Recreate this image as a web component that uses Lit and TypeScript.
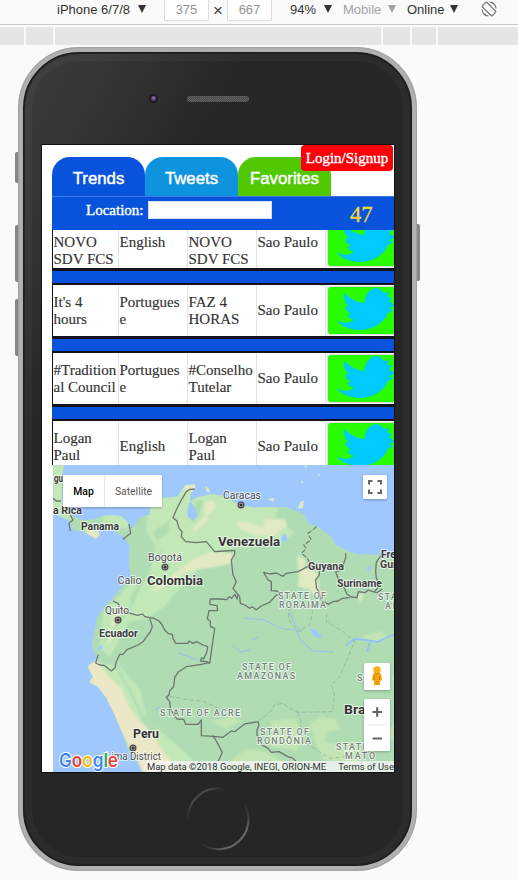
import { LitElement, html, svg, css } from "lit";
import { customElement } from "lit/decorators.js";

type Label = [text: string, x: number, y: number, width: number, kind: string];

const LABELS: Label[] = [
  ["gu", 54, 482, 9, "country"],
  ["a Rica", 53, 514, 29, "country"],
  ["Panama", 81, 530, 38, "country"],
  ["Caracas", 223, 499, 38, "city"],
  ["Venezuela", 218, 546, 62, "big"],
  ["Bogotá", 148, 561, 34, "city"],
  ["Calio", 117.5, 584, 24, "city"],
  ["Colombia", 147, 585, 56, "big"],
  ["Guyana", 308, 570, 36, "country"],
  ["Suriname", 337, 587, 45, "country"],
  ["French", 381, 558, 32, "country"],
  ["Guiana", 380, 568, 33, "country"],
  ["Quito", 105, 613.5, 24, "city"],
  ["Ecuador", 99, 637, 39, "country"],
  ["STATE OF", 278, 599, 48, "state"],
  ["RORAIMA", 279, 608, 47, "state"],
  ["STATE OF", 378, 600, 48, "state"],
  ["AMAPÁ", 385, 609, 38, "state"],
  ["STATE OF", 242, 670, 49, "state"],
  ["AMAZONAS", 237, 679, 58, "state"],
  ["STATE OF", 357, 681, 49, "state"],
  ["STATE OF ACRE", 160, 715.5, 80, "state"],
  ["STATE OF", 260, 735, 49, "state"],
  ["RONDÔNIA", 257, 744, 54, "state"],
  ["STATE OF", 336, 749.5, 49, "state"],
  ["MATO", 345, 759, 30, "state"],
  ["Brazil", 344, 714, 36, "big"],
  ["Peru", 133, 737.5, 26, "big"],
  ["Lima District", 106, 760, 55, "city"],
];

// Drawn in a 1023x921 grid, three units to the pixel.
const BORDERS = [
  "M425 72L408 74L400 80L385 105L372 130L360 158L372 168L378 190L387 200L385 215L398 230L430 233L460 230L470 242L485 260L515 258L545 256L545 268L535 285L540 330L550 350L540 370L552 385L560 395L562 415L575 420L590 430L598 425L610 434L625 423L650 412L668 392L682 386L672 378L655 377L655 350L645 345L632 322L650 327L670 324L690 334L700 325L735 320L765 304L785 298",
  "M785 298L800 316L798 332L788 345L790 368L800 385L803 402L825 418L840 410L855 408L868 400L890 398",
  "M878 265L878 280L872 295L868 315L848 320L856 342L863 352L872 365L882 388L895 396L912 398L916 380L936 383L945 375L960 380L972 383L988 372",
  "M985 270L970 292L968 318L970 340L980 356L974 368L965 380",
  "M555 388L552 402L545 388L536 400L530 395L520 404L505 402L472 402L470 418L492 422L494 437L468 437L463 462L472 468L472 484L485 490L470 595L462 590L442 588L446 578L452 582L462 560L464 545L450 540L430 530L420 535L408 528L405 535L368 535L360 520L358 508L345 505L335 495L328 480L318 468L303 460L290 458L276 455L268 447L254 451L235 446L210 438L195 415L180 408",
  "M290 460L298 485L292 500L270 530L255 540L222 554L210 568L200 568L190 590L186 608L175 618L155 602L140 600L128 594L136 568",
  "M470 592L445 598L400 605L375 622L365 638L362 665L350 678L348 690L340 697L350 710L352 730L362 748L372 762L392 763L398 778L435 778L445 765L445 812L480 814L510 817L535 798L545 800L575 777L615 770L618 780L612 795L612 812L620 822L627 840L645 850L655 862L678 860L703 874L720 880L730 890",
  "M480 812L490 828L508 862L495 890",
  "M0 100L10 108L24 108M52 150L60 165L48 175L52 198M228 177L233 205L222 213L210 223",
];

const DASHED = [
  "M790 185L780 195L765 205L775 225L752 240L760 250L745 265L762 278L770 293",
  "M350 694L410 705L450 708L495 730L515 733",
  "M615 770L650 742L665 720L690 715L710 730L735 742L838 740L845 690L835 660L860 635L905 530L870 500L820 470L822 440",
  "M735 742L745 770L740 800L760 835L830 880L920 870",
  "M712 425L705 460L735 500L770 480L780 435",
];

@customElement("area-map")
export class AreaMap extends LitElement {
  static styles = css`
    :host { display: block; position: relative; width: 341px; height: 307px; overflow: hidden; }
    .canvas { display: block; width: 341px; height: 307px; }
    text { font-family: Roboto, sans-serif; paint-order: stroke; stroke: #ffffffb0; stroke-width: 2px; stroke-linejoin: round; }
    .city { font-size: 10.8px; fill: #4c4c4c; }
    .country { font-size: 10.6px; font-weight: 700; fill: #3c3c3c; }
    .big { font-size: 13.5px; font-weight: 700; fill: #333; }
    .state { font-size: 8.9px; fill: #75837a; font-weight: 500; }
    .logo { font-family: Inter, sans-serif; font-size: 18.5px; font-weight: 600; stroke: #fff; stroke-width: 2px; }
    .types { position: absolute; left: 10px; top: 10px; display: flex; gap: 1px; height: 32px; box-shadow: 0 1px 2px #0004; background: #e6e6e6; }
    .type { background: #fff; display: flex; align-items: center; justify-content: center; font: 10.4px Roboto, sans-serif; color: #565656; width: 57px; }
    .type.on { width: 41px; font-weight: 500; color: #000; }
    .control { position: absolute; background: #fff; border-radius: 1.5px; box-shadow: 0 1px 3px #0004; }
    .full { right: 7px; top: 9.5px; width: 24px; height: 24px; }
    .peg { right: 4px; top: 198px; width: 26px; height: 27px; }
    .zoom { right: 4px; top: 234px; width: 26px; height: 52px; }
    .control svg { display: block; width: 100%; height: 100%; }
    .credit { position: absolute; right: 0; bottom: 0; height: 11px; width: 252px; box-sizing: border-box; padding: 0 0 0 5px;
      display: flex; justify-content: space-between; align-items: center; white-space: nowrap;
      font: 9.45px/10px Roboto, sans-serif; color: #333; background: linear-gradient(90deg, #f5f5f500, #f5f5f5cc 6px); }
  `;

  render() {
    return html`
      <svg class="canvas" viewBox="53 465 341 307">
        <defs>
          <path id="land" transform="translate(53 465) scale(.33333)" d="M0 0H33L28 28L28 118L48 130L60 152L85 165L125 163L150 152L180 150L205 154L225 172L235 192L250 172L268 152L290 150L292 124L325 100L372 95L398 60L425 58L427 68L412 88L411 110L430 98L475 87L515 93L555 118L600 128L650 126L700 126L755 148L765 175L800 188L835 215L850 240L880 256L910 268L985 270L1023 282V921H266L252 885L225 855L210 810L185 750L160 700L135 665L108 652L120 635L103 605L132 580L115 540L127 490L130 460L152 430L190 385L212 360L232 335L228 300L230 240L210 214L185 200L160 192L135 195L142 210L128 222L112 212L90 200L62 195L45 165L0 145Z"/>
          <clipPath id="shore"><use href="#land"/></clipPath>
          <filter id="soft"><feGaussianBlur stdDeviation="1.1"/></filter>
        </defs>
        <rect x="53" y="465" width="341" height="307" fill="#9fc8ff"/>
        <use href="#land" fill="#afdcb3"/>
        <g clip-path="url(#shore)"><g filter="url(#soft)">
          <path fill="#c2e8b7" d="M148 506L180 482L212 492L240 504L278 506L275 520L295 532L282 543L232 549L206 560L193 576L177 591L164 607L147 618L129 622L110 657L100 648L103 614L125 589L150 568L156 547L146 530ZM53 465H70V520L53 515ZM103 512H128V528H103ZM119 665L140 690L147 719L173 742L193 760L192 772H145L110 695L90 664Z"/>
          <path fill="#ece7c6" d="M88 662L98 661L108 676L121 688L130 708L140 722L154 736L164 753L173 762L179 772H143L119 728L106 700L88 682Z"/>
          <path fill="#e1eac2" d="M237 522L247 522L263 528L265 519L285 519L287 526L279 532L272 537L262 535L257 536L240 529ZM183 567L194 559L209 552L221 553L233 553L232 563L215 567L200 569L185 573L160 590L150 592L157 586ZM183 485L197 482L196 490L185 492ZM193 528L205 516L205 502L214 500L216 507L207 516L209 520L194 532ZM297 555L306 560L304 567L318 573L319 588L323 598L317 597L308 589L298 587L299 576ZM112 620L119 607L122 611L116 625L111 640L107 646ZM86 528L100 532L98 540L86 535ZM358 595L364 593L360 603Z"/>
          <path fill="#b0dcb1" d="M160 527L171 519L168 532L157 541L152 532ZM139 580L146 568L150 550L155 552L150 571L138 592L134 603L129 600ZM195 502L203 500L200 514L192 524ZM140 719L146 715L159 733L151 731Z"/>
          <path fill="#c2e5b3" d="M211 721L233 717L243 721L226 729ZM271 721L295 718L304 735L296 752L288 748L271 747ZM231 760L246 749L265 751L279 759L287 772H224ZM309 724L321 716L336 720L341 730L329 731L324 742L343 744L356 741L364 755L352 768L338 760L326 762L319 752ZM386 728L394 726V740L386 739ZM361 637L380 631L388 637L374 643Z"/>
          <path fill="none" stroke="#afdcb6" stroke-width="2.5" d="M105 640L123 617L135 600M156 562L163 548M109 658L118 670L130 691L140 712L154 733"/>
        </g></g>
        <path fill="#9fc8ff" d="M190.500 501L196 510L197 516L192 521L187 515L188 506ZM284 533L287 536L287 541L282 542L281 538ZM309 628L315 630L322 636L319 638L313 635ZM98 647L103 645L102 649L97 650ZM367 567L371 565L370 572L367 570Z"/>
        <path fill="#d7eac5" d="M205 486L209 488L210 493L206 491ZM300 502L304 501L303 508L298 509ZM268 499L275 498L273 502ZM304 466L307 465L306 469ZM318 474L320 474L319 477ZM302 480L304 483L301 482Z"/>
        <g fill="none" stroke="#94c1f5" stroke-width="1">
          <path d="M245 618L264 620L283 629L296 630L300 639L313 651L334 652M252 640L258 637M233 645L240 652L250 650M289 612L295 624L302 632M178 653L187 656L197 660M155 710L160 707"/>
          <path stroke-width="1.800" d="M345 646L355 639L366 640L378 642L389 636L394 635M370 642L367 652"/>
        </g>
        <g transform="translate(53 465) scale(.33333)" fill="none" stroke-linejoin="round">
          ${BORDERS.map((d) => svg`<path d=${d} stroke="#6c746e" stroke-width="3.8"/>`)}
          ${DASHED.map((d, i) => svg`<path d=${d} stroke=${i ? "#8fae98" : "#6c746e"} stroke-dasharray="14 6" stroke-width=${i ? 2.2 : 3.4}/>`)}
        </g>
        ${[[241, 505], [165, 567], [118, 620], [133, 748]].map(
          ([x, y]) => svg`<circle cx=${x} cy=${y} r="2.9" fill="#bbb" stroke="#444" stroke-width="1.2"/><circle cx=${x} cy=${y} r="1.6" fill="#333"/>`
        )}
        ${LABELS.map(([t, x, y, w, k]) => svg`<text class=${k} x=${x} y=${y} textLength=${w} lengthAdjust=${k === "state" ? "spacing" : "spacingAndGlyphs"}>${t}</text>`)}
        <text class="logo" x="59" y="767" textLength="59" lengthAdjust="spacingAndGlyphs"><tspan fill="#4285f4">G</tspan><tspan fill="#ea4335">o</tspan><tspan fill="#fbbc05">o</tspan><tspan fill="#4285f4">g</tspan><tspan fill="#34a853">l</tspan><tspan fill="#ea4335">e</tspan></text>
      </svg>
      <div class="types"><div class="type on">Map</div><div class="type">Satellite</div></div>
      <div class="control full"><svg viewBox="0 0 24 24"><path d="M6 9.500V6H9.500M14.500 6H18V9.500M18 14.500V18H14.500M9.500 18H6V14.500" fill="none" stroke="#666" stroke-width="2"/></svg></div>
      <div class="control peg"><svg viewBox="0 0 26 27"><path d="M9 11Q13 8 17 11L18 17L16 18V22H10V18L8 17Z" fill="#f5a50a"/><circle cx="13" cy="7" r="3.7" fill="#fbb013"/><path d="M10.5 10Q13 12 15.5 10M13 18V22M10.5 13V17M15.5 13V17" fill="none" stroke="#cf7c08" stroke-width=".8"/></svg></div>
      <div class="control zoom"><svg viewBox="0 0 26 52"><path d="M8.500 13H18M13.200 8.300V17.700M8.500 39.500H18" stroke="#666" stroke-width="2.2"/><path d="M4.500 26H21.500" stroke="#e3e3e3"/></svg></div>
      <div class="credit"><span>Map data ©2018 Google, INEGI, ORION-ME</span><span>Terms of Use</span></div>
    `;
  }
}

const TRENDS: string[][] = [
  ["\u00a0\nNOVO\nSDV FCS", "English", "\u00a0\nNOVO\nSDV FCS", "Sao Paulo"],
  ["It's 4\nhours", "Portugues\ne", "FAZ 4\nHORAS", "Sao Paulo"],
  ["#Tradition\nal Council", "Portugues\ne", "#Conselho\nTutelar", "Sao Paulo"],
  ["Logan\nPaul", "English", "Logan\nPaul", "Sao Paulo"],
];

@customElement("trend-table")
export class TrendTable extends LitElement {
  static styles = css`
    :host { display: block; height: 235px; overflow: hidden; background: #0852dc; }
    .rows { display: flex; flex-direction: column; gap: 12px; margin-top: -15px; }
    .row { display: grid; grid-template-columns: 66px 69px 69px 69px 69px; height: 51px; border: solid #10131a; border-width: 2px 0 3px 1px; background: #fff; }
    .cell { display: flex; align-items: center; white-space: pre; padding-left: 0.5px; border-right: 1px solid #dfe1f5; color: #333; font: 15px/17px "Liberation Serif", serif; -webkit-text-stroke: .15px #333; }
    .button { background: #29fb00; margin: 2px 0 2px 1.5px; border-radius: 3px 0 0 3px; box-shadow: 0 0 1px 1px #d5dcd8; }
    .bird { display: block; width: 67px; height: 47px; }
  `;

  render() {
    return html`<div class="rows">${TRENDS.map(
      (row) => html`<div class="row">
        ${row.map((text) => html`<div class="cell">${text}</div>`)}
        <div class="button"><svg class="bird" viewBox="0 0 67 47"><path fill="#00caff" d="M8 33C15 37 22 36 26 33C22 32 20 30 19 28L23 27C19 25 17 22 17 19L21 20C17 16 15 11 16 6C21 11 28 15 36 16C37 8 41 2 48 1C51 1 54 3 56 6L62 5L59 9L64 11L61 14L67 18L61 22L66 23L60 26C55 37 44 43 31 43C22 43 13 39 8 33Z"/></svg></div>
      </div>`
    )}</div>`;
  }
}

@customElement("app-root")
export class AppRoot extends LitElement {
  static styles = css`
    :host { display: block; position: relative; width: 518px; height: 880px; overflow: hidden; background: #fafafa; font-family: "Liberation Sans", sans-serif; }
    .toolbar { box-sizing: border-box; display: flex; padding-left: 57px; font-size: 13px; line-height: 19px; color: #333; border-bottom: 1px solid #c8c8c8; white-space: nowrap; height: 25px; }
    .item { display: flex; justify-content: space-between; }
    .device { width: 89px; }
    .arrow { width: 8px; height: 8px; margin-top: 5px; background: currentColor; clip-path: polygon(0 0, 100% 0, 50% 100%); }
    .size { width: 43px; height: 21px; margin-top: -2px; border: 1px solid #ddd; background: #fff; text-align: center; color: #949494; line-height: 22px; border-radius: 1px; box-sizing: content-box; }
    .first { margin-left: 18px; }
    .times { width: 18px; text-align: center; font-size: 17px; line-height: 22px; color: #444; }
    .scale { margin-left: 18px; width: 42px; }
    .mobile { margin-left: 11px; width: 53px; color: #a3a3a3; }
    .online { margin-left: 11px; width: 51px; }
    .rotate { width: 18px; height: 18px; margin-left: 22px; }
    .ruler { margin-top: 2px; height: 18px; display: grid; grid-template-columns: 24px 27px 326px 27px 24px 1fr; gap: 2px; }
    .tick { background: #e5e5e5; }
    .phone { position: relative; box-sizing: border-box; width: 399px; height: 824px; margin: 2px 0 0 18px; border: 5px solid #b0b0b0; border-radius: 61px; background: #1d1d1d; padding: 1px; }
    .phone::before { content: ""; position: absolute; inset: -5px; border: 1px solid #a1a1a1; border-radius: 61px; }
    .face { box-sizing: border-box; height: 812px; border-radius: 55px; border: 1px solid #232323; box-shadow: inset 0 0 0 7px #ffffff08; background: linear-gradient(120deg, #3b3b3b 0, #363636 10%, #262626 27%); padding: 91px 0 0 17px; }
    .key { position: absolute; width: 3px; background: #85858a; border-radius: 2px 0 0 2px; left: -8px; }
    .mute { top: 100px; height: 31px; }
    .up { top: 173px; height: 57px; }
    .down { top: 247px; height: 57px; }
    .power { left: auto; right: -8px; top: 172px; height: 57px; border-radius: 0 2px 2px 0; }
    .hardware { position: absolute; left: 0; top: 0; width: 389px; height: 814px; }
    .screen { position: relative; width: 352px; height: 627px; background: #fff; overflow: hidden; box-shadow: 0 0 0 1px #111; box-sizing: border-box; padding: 12px 0 0 10px; }
    .tabs { display: grid; grid-template-columns: 93px 93px 93px; height: 39px; }
    .tab { height: 39px; border-radius: 18px 18px 0 0; color: #fff; font: 16.8px/44px "Liberation Sans", sans-serif; text-align: center; -webkit-text-stroke: .45px #fff; background: #0852dc; }
    .tweets { background: #0e94de; }
    .favorites { background: #50c804; }
    .bar { display: flex; height: 34px; box-sizing: border-box; border-top: 1px solid #397be0; background: #0852dc; color: #fff; font: 15px/17px "Liberation Serif", serif; padding: 4px 0 0 34px; }
    .caption { width: 62px; padding-top: 1px; white-space: nowrap; -webkit-text-stroke: .4px #fff; }
    .field { width: 124px; height: 18px; background: #fff; border: 1px solid #d6def0; box-sizing: border-box; }
    .count { margin-left: 78px; padding-top: 2px; font-size: 22.5px; line-height: 24px; color: #f4d938; -webkit-text-stroke: .3px #f4d938; }
    .login { position: absolute; right: 1px; top: 0; width: 92px; height: 26px; border-radius: 4px; background: #fb0007; color: #fff; font: 15px/26px "Liberation Serif", serif; text-align: center; -webkit-text-stroke: .4px #fff; }
    .map { margin-left: 1px; }
  `;

  render() {
    return html`
      <div class="toolbar">
        <div class="item device">iPhone 6/7/8<i class="arrow"></i></div>
        <div class="size first">375</div><div class="times">×</div><div class="size">667</div>
        <div class="item scale">94%<i class="arrow"></i></div>
        <div class="item mobile">Mobile<i class="arrow"></i></div>
        <div class="item online">Online<i class="arrow"></i></div>
        <svg class="rotate" viewBox="0 0 18 18" fill="none" stroke="#777" stroke-width="1.2"><rect x="5.8" y="2" width="6.4" height="14" rx="1" transform="rotate(-45 9 9)"/><path d="M9.5 2A7 7 0 0 1 16 8.5M8.5 16A7 7 0 0 1 2 9.5" /><path d="M11 2L14 4M7 16L4 14" /></svg>
      </div>
      <div class="ruler">${[0, 1, 2, 3, 4, 5].map(() => html`<div class="tick"></div>`)}</div>
      <div class="phone">
        <i class="key mute"></i><i class="key up"></i><i class="key down"></i><i class="key power"></i>
        <div class="face">
          <div class="screen">
            <div class="tabs"><div class="tab">Trends</div><div class="tab tweets">Tweets</div><div class="tab favorites">Favorites</div></div>
            <div class="bar"><span class="caption">Location:</span><div class="field"></div><span class="count">47</span></div>
            <trend-table></trend-table>
            <area-map class="map"></area-map>
            <div class="login">Login/Signup</div>
          </div>
        </div>
        <svg class="hardware" viewBox="23 52 389 814">
          <defs>
            <pattern id="mesh" width="2" height="2" patternUnits="userSpaceOnUse"><rect width="2" height="2" fill="#484848"/><rect width="1" height="1" fill="#686868"/><rect x="1" y="1" width="1" height="1" fill="#5c5c5c"/></pattern>
            <linearGradient id="arcTop" gradientUnits="userSpaceOnUse" x1="187" y1="820" x2="226" y2="789"><stop offset="0" stop-color="#262626"/><stop offset=".3" stop-color="#4a4a4a"/><stop offset=".7" stop-color="#4a4a4a"/><stop offset="1" stop-color="#262626"/></linearGradient>
            <linearGradient id="arcLow" gradientUnits="userSpaceOnUse" x1="246" y1="804" x2="200" y2="844"><stop offset="0" stop-color="#262626"/><stop offset=".25" stop-color="#666"/><stop offset=".75" stop-color="#666"/><stop offset="1" stop-color="#262626"/></linearGradient>
          </defs>
          <circle cx="153.5" cy="98.5" r="6" fill="#2b292d" stroke="#353337"/><circle cx="153.5" cy="98.5" r="4.2" fill="#19151f"/><circle cx="153.5" cy="98.5" r="2.7" fill="#584070"/><circle cx="153.5" cy="98" r="1.2" fill="#8c74a5"/>
          <rect x="187" y="96" width="62" height="6" rx="3" fill="url(#mesh)"/>
          <g fill="none" stroke-width="2"><path d="M188 820A30 30 0 0 1 226 789.500" stroke="url(#arcTop)"/><path d="M245 805A30 30 0 0 1 201 843.500" stroke="url(#arcLow)"/></g>
        </svg>
      </div>
    `;
  }
}
